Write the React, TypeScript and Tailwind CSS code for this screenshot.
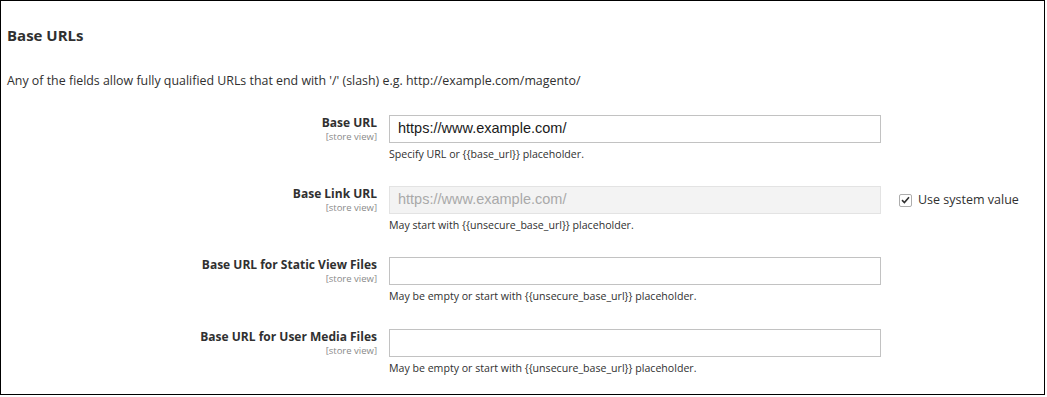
import React from "react";

const font = { fontFamily: '"Open Sans", "Noto Sans", sans-serif' };

function Row({
  label,
  value,
  note,
  disabled,
  system,
  tall,
}: {
  label: string;
  value?: string;
  note: string;
  disabled?: boolean;
  system?: boolean;
  tall?: boolean;
}) {
  return (
    <div className={"flex " + (tall ? "h-[72px]" : "h-[71px]")}>
      <div className="w-[376px] shrink-0 flex flex-col items-end">
        <div className="text-[12px] leading-[16px] font-bold text-[#303030]">{label}</div>
        <div className="text-[9.5px] leading-[11px] text-[#8a8a8a]">[store view]</div>
      </div>
      <div className="ml-[12px] flex flex-col">
        <div className="flex items-center">
          <div
            className={
              "w-[492px] h-[28px] border flex items-center px-[8px] text-[14.5px] " +
              (disabled
                ? "bg-[#f3f3f3] border-[#e3e3e3] text-[#a9a9a9]"
                : "bg-white border-[#c2c2c2] text-[#1a1a1a]")
            }
            style={{ fontFamily: '"Liberation Sans", Arial, sans-serif' }}
          >
            {value}
          </div>
          {system && (
            <div className="flex items-center ml-[18px] gap-[6px]">
              <div className="w-[13px] h-[13px] border border-[#adadad] rounded-[2px] flex items-center justify-center bg-white">
                <svg width="9" height="8" viewBox="0 0 9 8">
                  <path d="M1 4.2 L3.4 6.5 L8 1.3" fill="none" stroke="#303030" strokeWidth="1.6" />
                </svg>
              </div>
              <span className="text-[12.5px] text-[#303030]">Use system value</span>
            </div>
          )}
        </div>
        <div className="text-[10.6px] leading-[13px] text-[#303030] mt-[5px]">{note}</div>
      </div>
    </div>
  );
}

export default function App() {
  return (
    <div className="w-[1047px] h-[397px] bg-white" style={font}>
      <div className="w-[1045px] h-[395px] border border-black flex flex-col">
        <div className="mx-[5px] mt-[4px] h-[2px] bg-[#e6e6e6] w-[1029px]" />
        <div className="ml-[6px] mt-[20px] text-[15px] leading-[20px] font-bold text-[#303030]">Base URLs</div>
        <div className="ml-[6px] mt-[27px] text-[12.4px] leading-[17px] text-[#303030]">
          Any of the fields allow fully qualified URLs that end with '/' (slash) e.g. http://example.com/magento/
        </div>
        <div className="mt-[26px] flex flex-col">
          <Row label="Base URL" value="https://www.example.com/" note="Specify URL or {{base_url}} placeholder." />
          <Row
            label="Base Link URL"
            value="https://www.example.com/"
            note="May start with {{unsecure_base_url}} placeholder."
            disabled
            system
          />
          <Row label="Base URL for Static View Files" note="May be empty or start with {{unsecure_base_url}} placeholder." tall />
          <Row label="Base URL for User Media Files" note="May be empty or start with {{unsecure_base_url}} placeholder." />
        </div>
      </div>
    </div>
  );
}
